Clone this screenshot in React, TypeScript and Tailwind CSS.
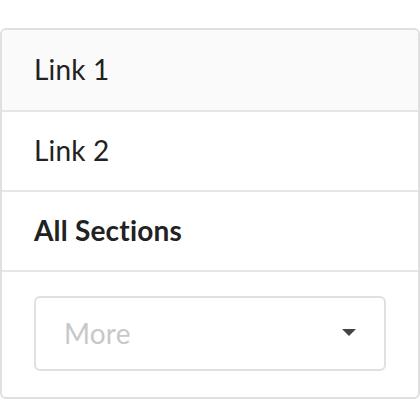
export default function App() {
    return (
        <div className="w-[420px] h-[400px] bg-white pt-[28px]" style={{ fontFamily: "Lato, 'Noto Sans', sans-serif" }}>
            <div className="border-2 border-[#e0e0e0] rounded-[6px] overflow-hidden">
                <div className="h-[82px] flex items-center pl-[32px] pb-[3px] bg-[#fafafa] border-b-2 border-[#e6e6e6] text-[28px] tracking-[0.2px] text-[#222]">
                    Link 1
                </div>
                <div className="h-[80px] flex items-center pl-[32px] pb-[3px] border-b-2 border-[#e6e6e6] text-[28px] tracking-[0.2px] text-[#222]">
                    Link 2
                </div>
                <div className="h-[80px] flex items-center pl-[32px] pb-[3px] border-b-2 border-[#e6e6e6] text-[28px] tracking-[0.2px] font-bold text-[#222]">
                    All Sections
                </div>
                <div className="px-[32px] pt-[24px] pb-[26px]">
                    <div className="h-[75px] border-2 border-[#e0e0e0] rounded-[6px] flex items-center justify-between pl-[28px] pr-[28px] pb-[2px]">
                        <span className="text-[28px] tracking-[0.2px] text-[#c8c8c8]">More</span>
                        <svg width="14" height="8" viewBox="0 0 14 8">
                            <path d="M0 0 L14 0 L7 7 Z" fill="#444" />
                        </svg>
                    </div>
                </div>
            </div>
        </div>
    );
}
